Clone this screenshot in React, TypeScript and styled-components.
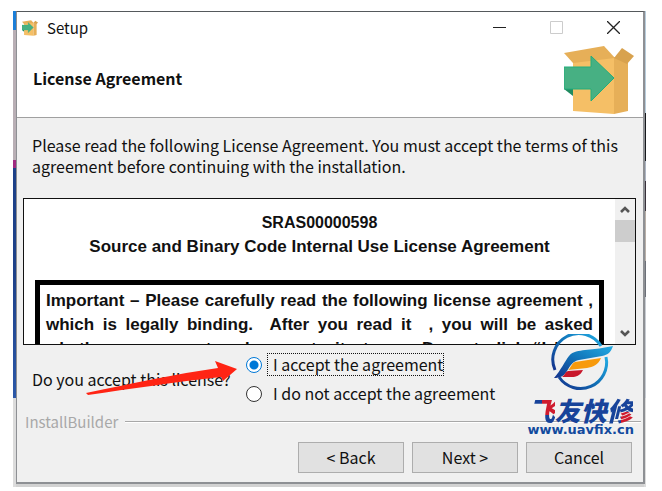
import React from 'react';
import styled, { createGlobalStyle } from 'styled-components';

const GlobalStyle = createGlobalStyle`
  * { box-sizing: border-box; }
  body { margin: 0; background: #fff; color: #111; font: 16px/21px "Noto Sans CJK SC", sans-serif; }
`;

const Desktop = styled.div`
  display: grid;
  margin: 11px 16px 5px 13px;
  padding: 0 1px 3px 3px;
  background:
    linear-gradient(#1b7ed8 0 19px, #b9afb5 19px 149px, #a02a80 149px 157px, #1d4088 157px 260px, #2c58a8 387px, #dcdcdc 387px) left / 3px 100% no-repeat,
    linear-gradient(#b8cddc 0 102px, #16181c 102px 150px, #aeb6c4 150px 170px, #38303a 170px 200px, #b9b0a8 200px 250px, #6c7078 250px 286px, #c8ccd2 286px 387px, #dcdcdc 387px) right / 2px 100% no-repeat,
    #d2d2d2;
`;

const Dialog = styled.main`
  min-width: 0;
  background: #f0f0f0;
  border: 2px solid #8e9094;
  border-left-width: 1px;
  border-top: 1px solid #55595c;
`;

const TitleBar = styled.header`
  display: flex;
  align-items: center;
  height: 31px;
  padding: 0 1px 0 5px;
  background: #fff;
`;

const AppTitle = styled.span`
  flex: 1;
  margin-left: 9px;
  font-size: 15px;
`;

const WindowButton = styled.button`
  display: grid;
  place-items: center;
  width: 57px;
  height: 31px;
  padding: 0;
  border: 0;
  background: none;
  color: #222;
  &:disabled { color: #ccc; }
`;

const Banner = styled.section`
  display: flex;
  justify-content: space-between;
  height: 75px;
  padding: 2px 9px 0 16px;
  background: #fff;
  border-bottom: 1px solid #a0a0a0;
`;

const Heading = styled.h1`
  margin: 23px 0 0;
  font: bold 16px/21px "Noto Sans CJK SC", sans-serif;
`;

const Intro = styled.p`
  margin: 0;
  padding: 17px 8px 21px 15px;
`;

const LicenseBox = styled.section`
  display: flex;
  height: 147px;
  margin: 0 7px 0 6px;
  border: 1px solid #111;
  background: #fff;
`;

const LicenseText = styled.div`
  flex: 1;
  min-width: 0;
  overflow: hidden;
  padding: 12px 11px 0;
  font: bold 17px/24px "Liberation Sans", sans-serif;
`;

const LicenseTitle = styled.h2`
  margin: 0;
  font: inherit;
  text-align: center;
`;

const LicenseNumber = styled.span`
  display: block;
  font-size: 16px;
`;

const Notice = styled.div`
  margin-top: 21px;
  padding: 4px 6px;
  border: 5px solid #000;
`;

const NoticeLine = styled.div`
  white-space: pre-wrap;
  text-align: justify;
  text-align-last: justify;
`;

const ScrollBar = styled.div`
  display: flex;
  flex-direction: column;
  justify-content: space-between;
  width: 20px;
  background: #f0f0f0;
`;

const ScrollButton = styled.button`
  display: grid;
  place-items: center;
  height: 21px;
  padding: 0;
  border: 0;
  background: none;
  color: #555;
`;

const ScrollThumb = styled.div`
  height: 22px;
  margin-bottom: auto;
  background: #cdcdcd;
`;

const Question = styled.fieldset`
  position: relative;
  display: flex;
  align-items: center;
  margin: 0;
  padding: 8px 0 0 15px;
  border: 0;
`;

const QuestionText = styled.span`
  width: 214px;
`;

const Choices = styled.div`
  display: grid;
  gap: 6px;
`;

const Choice = styled.label`
  display: flex;
  align-items: center;
  gap: 5px;
`;

const Radio = styled.input`
  appearance: none;
  width: 16px;
  height: 16px;
  margin: 0;
  border: 1px solid #333;
  border-radius: 50%;
  background: #fff;
  &:checked {
    border-color: #0078d7;
    background: radial-gradient(circle, #0078d7 0 4px, #fff 5px);
  }
`;

const ChoiceText = styled.span<{ $focused?: boolean }>`
  padding: 0 0 0 5px;
  border: 1px dotted ${p => (p.$focused ? '#111' : 'transparent')};
`;

const Pointer = styled.svg`
  position: absolute;
  left: 68px;
  top: 15px;
`;

const Brand = styled.div`
  display: flex;
  align-items: center;
  gap: 7px;
  padding: 6px 0 0 8px;
  color: #a8a8a8;
  font-size: 15px;
`;

const Rule = styled.hr`
  flex: 1;
  margin: 0 2px 0 0;
  border: 0;
  border-top: 1px solid #a8a8a8;
  border-bottom: 1px solid #fff;
`;

const Actions = styled.footer`
  display: flex;
  justify-content: flex-end;
  gap: 8px;
  padding: 10px 11px 9px;
`;

const ActionButton = styled.button`
  width: 106px;
  height: 31px;
  padding: 0;
  border: 1px solid #adadad;
  background: #e1e1e1;
  color: #111;
  font: inherit;
`;

const Watermark = styled.aside`
  position: absolute;
  right: 9px;
  top: -11px;
  display: grid;
  justify-items: center;
  pointer-events: none;
`;

const SiteName = styled.span`
  color: #124a9e;
  font: bold 13px/16px "DejaVu Sans", sans-serif;
`;

const BrandName = styled.span`
  margin-top: 6px;
  color: #17439a;
  font: italic 900 26px/24px "Noto Sans CJK SC", sans-serif;
`;

const TwoTone = styled.span<{ $from: string }>`
  background: linear-gradient(#cf1b2e, #cf1b2e) ${p => p.$from} no-repeat #17439a;
  background-clip: text;
  -webkit-background-clip: text;
  color: transparent;
`;

function BoxIcon({ size }: { size: number }) {
  return (
    <svg width={size} height={size} viewBox="0 0 70 70" aria-hidden="true">
      <path d="M9 15 50 12 50 69 9 66Z" fill="#f5bf66" />
      <path d="M50 12 64 17 64 66 50 69Z" fill="#e6af58" />
      <path d="M0 8 40 1 51 13 9 18Z" fill="#e6af58" />
      <path d="M50 13 58 3 70 11 63 19Z" fill="#d8a24e" />
      <path d="M0 44 9 44 9 51Z" fill="#208b60" />
      <path d="M0 22H27V11L50 33 27 56V44H0Z" fill="#47b083" stroke="#22ad7c" />
    </svg>
  );
}

function Chevron({ down }: { down?: boolean }) {
  return (
    <svg width="10" height="9" viewBox="0 0 10 9" fill="none" stroke="currentColor" strokeWidth="2.6" aria-hidden="true">
      <path d={down ? 'M1 2 5 6 9 2' : 'M1 7 5 3 9 7'} />
    </svg>
  );
}

function WingLogo() {
  return (
    <svg width="64" height="58" viewBox="-2 0 64 58" aria-hidden="true">
      <defs>
        <linearGradient id="wing" x1="0" y1="1" x2="1" y2="0">
          <stop stopColor="#14328c" />
          <stop offset=".5" stopColor="#1173b8" />
          <stop offset="1" stopColor="#22ace4" />
        </linearGradient>
      </defs>
      <path d="M4 36A26 26 0 0 1 50 12" fill="none" stroke="url(#wing)" strokeWidth="3" />
      <path d="M55 23A26 26 0 0 1 8 43" fill="none" stroke="url(#wing)" strokeWidth="3" />
      <path d="M3 44C10 36 14 27 18 22C22 17 28 17 34 16C44 15 53 14 62 12C60 18 57 21 51 22L28 26C22 27 19 32 16 37C13 42 9 44 3 44Z" fill="url(#wing)" />
      <path d="M24 28 50 24C47 31 42 33 36 34L17 36C20 34 20 30 24 28Z" fill="#f79a0c" />
      <path d="M17 37 32 36C29 42 25 43 21 43L11 43C14 41 14 38 17 37Z" fill="#c8172b" />
    </svg>
  );
}

export default function App() {
  return (
    <>
      <GlobalStyle />
      <Desktop>
        <Dialog>
          <TitleBar>
            <BoxIcon size={16} />
            <AppTitle>Setup</AppTitle>
            <WindowButton aria-label="Minimize">
              <svg width="13" height="13" stroke="currentColor"><path d="M0 6.500H13" /></svg>
            </WindowButton>
            <WindowButton aria-label="Maximize" disabled>
              <svg width="13" height="13" fill="none" stroke="currentColor"><path d="M.5 .5H12.500V12.500H.5Z" /></svg>
            </WindowButton>
            <WindowButton aria-label="Close">
              <svg width="13" height="13" stroke="currentColor" strokeWidth="1.3"><path d="M0 0 13 13M13 0 0 13" /></svg>
            </WindowButton>
          </TitleBar>
          <Banner>
            <Heading>License Agreement</Heading>
            <BoxIcon size={70} />
          </Banner>
          <Intro>
            Please read the following License Agreement. You must accept the terms of this
            agreement before continuing with the installation.
          </Intro>
          <LicenseBox>
            <LicenseText>
              <LicenseTitle>
                <LicenseNumber>SRAS00000598</LicenseNumber>
                Source and Binary Code Internal Use License Agreement
              </LicenseTitle>
              <Notice>
                <NoticeLine>Important – Please carefully read the following license agreement ,</NoticeLine>
                <NoticeLine>{'which is legally binding.  After you read it  , you will be asked'}</NoticeLine>
                <NoticeLine>whether you accept and agree to its terms. Do not click “I have</NoticeLine>
              </Notice>
            </LicenseText>
            <ScrollBar>
              <ScrollButton aria-label="Scroll up"><Chevron /></ScrollButton>
              <ScrollThumb />
              <ScrollButton aria-label="Scroll down"><Chevron down /></ScrollButton>
            </ScrollBar>
          </LicenseBox>
          <Question>
            <QuestionText>Do you accept this license?</QuestionText>
            <Choices>
              <Choice>
                <Radio type="radio" name="license" defaultChecked />
                <ChoiceText $focused>I accept the agreement</ChoiceText>
              </Choice>
              <Choice>
                <Radio type="radio" name="license" />
                <ChoiceText>I do not accept the agreement</ChoiceText>
              </Choice>
            </Choices>
            <Pointer width="153" height="36" viewBox="0 0 153 36" aria-hidden="true">
              <path d="M1 33C50 23 90 14 133 8L130 1 152 9 138 21 136 17C90 22 45 29 3 35Z" fill="#ff2414" />
            </Pointer>
            <Watermark>
              <WingLogo />
              <BrandName>
                <TwoTone $from="13px 2px / 14px 22px">飞</TwoTone>友快<TwoTone $from="14px 21px / 14px 20px">修</TwoTone>
              </BrandName>
              <SiteName>www.uavfix.cn</SiteName>
            </Watermark>
          </Question>
          <Brand>InstallBuilder<Rule /></Brand>
          <Actions>
            <ActionButton>&lt; Back</ActionButton>
            <ActionButton>Next &gt;</ActionButton>
            <ActionButton>Cancel</ActionButton>
          </Actions>
        </Dialog>
      </Desktop>
    </>
  );
}
